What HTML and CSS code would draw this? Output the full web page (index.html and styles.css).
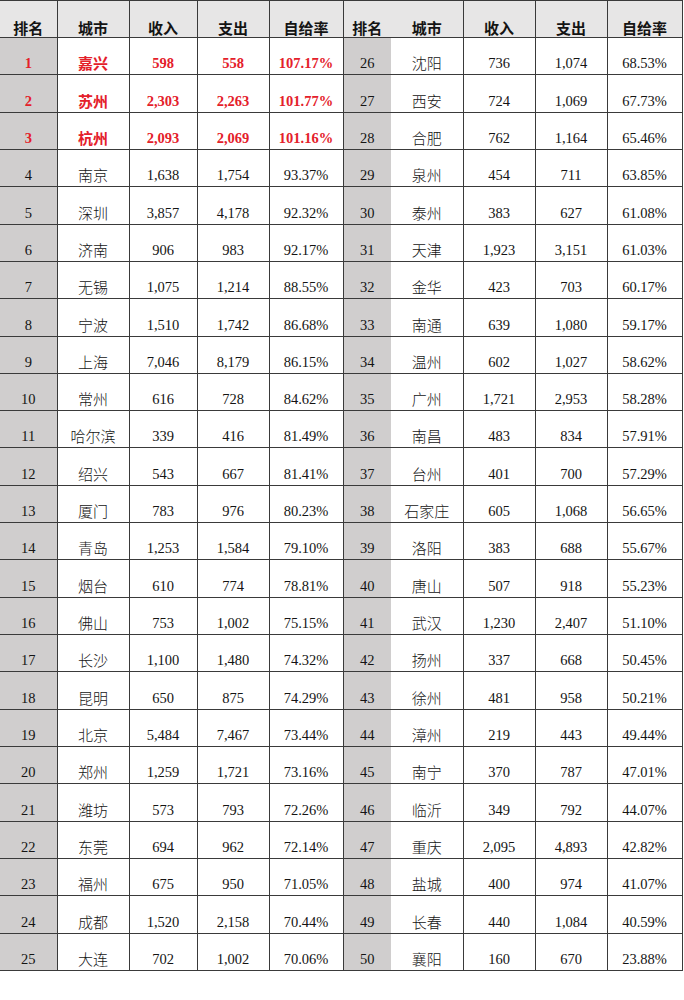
FILE: index.html
```html
<!DOCTYPE html>
<html lang="zh-CN">
<head>
<meta charset="utf-8">
<title>城市财政自给率排名</title>
<link rel="stylesheet" href="styles.css">
</head>
<body>
<table class="rank-table">
<colgroup>
<col class="w-rk"><col class="w-ct"><col class="w-in"><col class="w-out"><col class="w-rate">
<col class="w-rk2"><col class="w-ct2"><col class="w-in2"><col class="w-out2"><col class="w-rate2">
</colgroup>
<thead>
<tr><th>排名</th><th>城市</th><th>收入</th><th>支出</th><th>自给率</th><th class="rk2">排名</th><th>城市</th><th>收入</th><th>支出</th><th>自给率</th></tr>
</thead>
<tbody>
<tr class="top"><td class="rk num">1</td><td class="ct">嘉兴</td><td class="num">598</td><td class="num">558</td><td class="num">107.17%</td><td class="rk rk2 num plain">26</td><td class="ct plain">沈阳</td><td class="num plain">736</td><td class="num plain">1,074</td><td class="num plain">68.53%</td></tr>
<tr class="top"><td class="rk num">2</td><td class="ct">苏州</td><td class="num">2,303</td><td class="num">2,263</td><td class="num">101.77%</td><td class="rk rk2 num plain">27</td><td class="ct plain">西安</td><td class="num plain">724</td><td class="num plain">1,069</td><td class="num plain">67.73%</td></tr>
<tr class="top"><td class="rk num">3</td><td class="ct">杭州</td><td class="num">2,093</td><td class="num">2,069</td><td class="num">101.16%</td><td class="rk rk2 num plain">28</td><td class="ct plain">合肥</td><td class="num plain">762</td><td class="num plain">1,164</td><td class="num plain">65.46%</td></tr>
<tr><td class="rk num">4</td><td class="ct">南京</td><td class="num">1,638</td><td class="num">1,754</td><td class="num">93.37%</td><td class="rk rk2 num">29</td><td class="ct">泉州</td><td class="num">454</td><td class="num">711</td><td class="num">63.85%</td></tr>
<tr><td class="rk num">5</td><td class="ct">深圳</td><td class="num">3,857</td><td class="num">4,178</td><td class="num">92.32%</td><td class="rk rk2 num">30</td><td class="ct">泰州</td><td class="num">383</td><td class="num">627</td><td class="num">61.08%</td></tr>
<tr><td class="rk num">6</td><td class="ct">济南</td><td class="num">906</td><td class="num">983</td><td class="num">92.17%</td><td class="rk rk2 num">31</td><td class="ct">天津</td><td class="num">1,923</td><td class="num">3,151</td><td class="num">61.03%</td></tr>
<tr><td class="rk num">7</td><td class="ct">无锡</td><td class="num">1,075</td><td class="num">1,214</td><td class="num">88.55%</td><td class="rk rk2 num">32</td><td class="ct">金华</td><td class="num">423</td><td class="num">703</td><td class="num">60.17%</td></tr>
<tr><td class="rk num">8</td><td class="ct">宁波</td><td class="num">1,510</td><td class="num">1,742</td><td class="num">86.68%</td><td class="rk rk2 num">33</td><td class="ct">南通</td><td class="num">639</td><td class="num">1,080</td><td class="num">59.17%</td></tr>
<tr><td class="rk num">9</td><td class="ct">上海</td><td class="num">7,046</td><td class="num">8,179</td><td class="num">86.15%</td><td class="rk rk2 num">34</td><td class="ct">温州</td><td class="num">602</td><td class="num">1,027</td><td class="num">58.62%</td></tr>
<tr><td class="rk num">10</td><td class="ct">常州</td><td class="num">616</td><td class="num">728</td><td class="num">84.62%</td><td class="rk rk2 num">35</td><td class="ct">广州</td><td class="num">1,721</td><td class="num">2,953</td><td class="num">58.28%</td></tr>
<tr><td class="rk num">11</td><td class="ct">哈尔滨</td><td class="num">339</td><td class="num">416</td><td class="num">81.49%</td><td class="rk rk2 num">36</td><td class="ct">南昌</td><td class="num">483</td><td class="num">834</td><td class="num">57.91%</td></tr>
<tr><td class="rk num">12</td><td class="ct">绍兴</td><td class="num">543</td><td class="num">667</td><td class="num">81.41%</td><td class="rk rk2 num">37</td><td class="ct">台州</td><td class="num">401</td><td class="num">700</td><td class="num">57.29%</td></tr>
<tr><td class="rk num">13</td><td class="ct">厦门</td><td class="num">783</td><td class="num">976</td><td class="num">80.23%</td><td class="rk rk2 num">38</td><td class="ct">石家庄</td><td class="num">605</td><td class="num">1,068</td><td class="num">56.65%</td></tr>
<tr><td class="rk num">14</td><td class="ct">青岛</td><td class="num">1,253</td><td class="num">1,584</td><td class="num">79.10%</td><td class="rk rk2 num">39</td><td class="ct">洛阳</td><td class="num">383</td><td class="num">688</td><td class="num">55.67%</td></tr>
<tr><td class="rk num">15</td><td class="ct">烟台</td><td class="num">610</td><td class="num">774</td><td class="num">78.81%</td><td class="rk rk2 num">40</td><td class="ct">唐山</td><td class="num">507</td><td class="num">918</td><td class="num">55.23%</td></tr>
<tr><td class="rk num">16</td><td class="ct">佛山</td><td class="num">753</td><td class="num">1,002</td><td class="num">75.15%</td><td class="rk rk2 num">41</td><td class="ct">武汉</td><td class="num">1,230</td><td class="num">2,407</td><td class="num">51.10%</td></tr>
<tr><td class="rk num">17</td><td class="ct">长沙</td><td class="num">1,100</td><td class="num">1,480</td><td class="num">74.32%</td><td class="rk rk2 num">42</td><td class="ct">扬州</td><td class="num">337</td><td class="num">668</td><td class="num">50.45%</td></tr>
<tr><td class="rk num">18</td><td class="ct">昆明</td><td class="num">650</td><td class="num">875</td><td class="num">74.29%</td><td class="rk rk2 num">43</td><td class="ct">徐州</td><td class="num">481</td><td class="num">958</td><td class="num">50.21%</td></tr>
<tr><td class="rk num">19</td><td class="ct">北京</td><td class="num">5,484</td><td class="num">7,467</td><td class="num">73.44%</td><td class="rk rk2 num">44</td><td class="ct">漳州</td><td class="num">219</td><td class="num">443</td><td class="num">49.44%</td></tr>
<tr><td class="rk num">20</td><td class="ct">郑州</td><td class="num">1,259</td><td class="num">1,721</td><td class="num">73.16%</td><td class="rk rk2 num">45</td><td class="ct">南宁</td><td class="num">370</td><td class="num">787</td><td class="num">47.01%</td></tr>
<tr><td class="rk num">21</td><td class="ct">潍坊</td><td class="num">573</td><td class="num">793</td><td class="num">72.26%</td><td class="rk rk2 num">46</td><td class="ct">临沂</td><td class="num">349</td><td class="num">792</td><td class="num">44.07%</td></tr>
<tr><td class="rk num">22</td><td class="ct">东莞</td><td class="num">694</td><td class="num">962</td><td class="num">72.14%</td><td class="rk rk2 num">47</td><td class="ct">重庆</td><td class="num">2,095</td><td class="num">4,893</td><td class="num">42.82%</td></tr>
<tr><td class="rk num">23</td><td class="ct">福州</td><td class="num">675</td><td class="num">950</td><td class="num">71.05%</td><td class="rk rk2 num">48</td><td class="ct">盐城</td><td class="num">400</td><td class="num">974</td><td class="num">41.07%</td></tr>
<tr><td class="rk num">24</td><td class="ct">成都</td><td class="num">1,520</td><td class="num">2,158</td><td class="num">70.44%</td><td class="rk rk2 num">49</td><td class="ct">长春</td><td class="num">440</td><td class="num">1,084</td><td class="num">40.59%</td></tr>
<tr><td class="rk num">25</td><td class="ct">大连</td><td class="num">702</td><td class="num">1,002</td><td class="num">70.06%</td><td class="rk rk2 num">50</td><td class="ct">襄阳</td><td class="num">160</td><td class="num">670</td><td class="num">23.88%</td></tr>
</tbody>
</table>
</body>
</html>
```

FILE: styles.css
```css
html, body {
  margin: 0;
  padding: 0;
  background: #ffffff;
}

.rank-table {
  border-collapse: collapse;
  table-layout: fixed;
  width: 682px;
  color: #141414;
}

.w-rk { width: 57px; }
.w-ct { width: 72px; }
.w-in { width: 68px; }
.w-out { width: 72px; }
.w-rate { width: 74px; }
.w-rk2 { width: 48px; }
.w-ct2 { width: 72px; }
.w-in2 { width: 72px; }
.w-out2 { width: 72px; }
.w-rate2 { width: 75px; }

.rank-table th,
.rank-table td {
  border-right: 1px solid #3a3a3a;
  border-bottom: 1px solid #3a3a3a;
  text-align: center;
  vertical-align: bottom;
  white-space: nowrap;
  overflow: hidden;
}

.rank-table th.rk2,
.rank-table td.rk2 {
  border-right: none;
}

.rank-table thead tr {
  height: 37px;
}

.rank-table th {
  border-top: 1px solid #3a3a3a;
  background: #e7e6e6;
  font-family: "Noto Sans CJK SC", "Noto Sans", sans-serif;
  font-weight: 700;
  font-size: 15px;
  line-height: 17px;
  padding: 0 0 1px;
}

.rank-table tbody tr {
  height: 37.32px;
}

.rank-table td {
  padding: 0 0 3px;
  font-size: 15px;
  line-height: 17px;
}

.rank-table td.rk {
  background: #d0cece;
}

.rank-table td.ct {
  font-family: "Noto Sans CJK SC", "Noto Sans", sans-serif;
  font-weight: 300;
}

.rank-table td.num {
  font-family: "Liberation Serif", "Times New Roman", serif;
  font-size: 14.5px;
  padding-bottom: 2px;
}

.rank-table tr.top td {
  color: #e4202a;
  font-weight: 700;
}

.rank-table tr.top td.plain {
  color: #141414;
  font-weight: 300;
}

.rank-table tr.top td.num.plain {
  font-weight: 400;
}
```
